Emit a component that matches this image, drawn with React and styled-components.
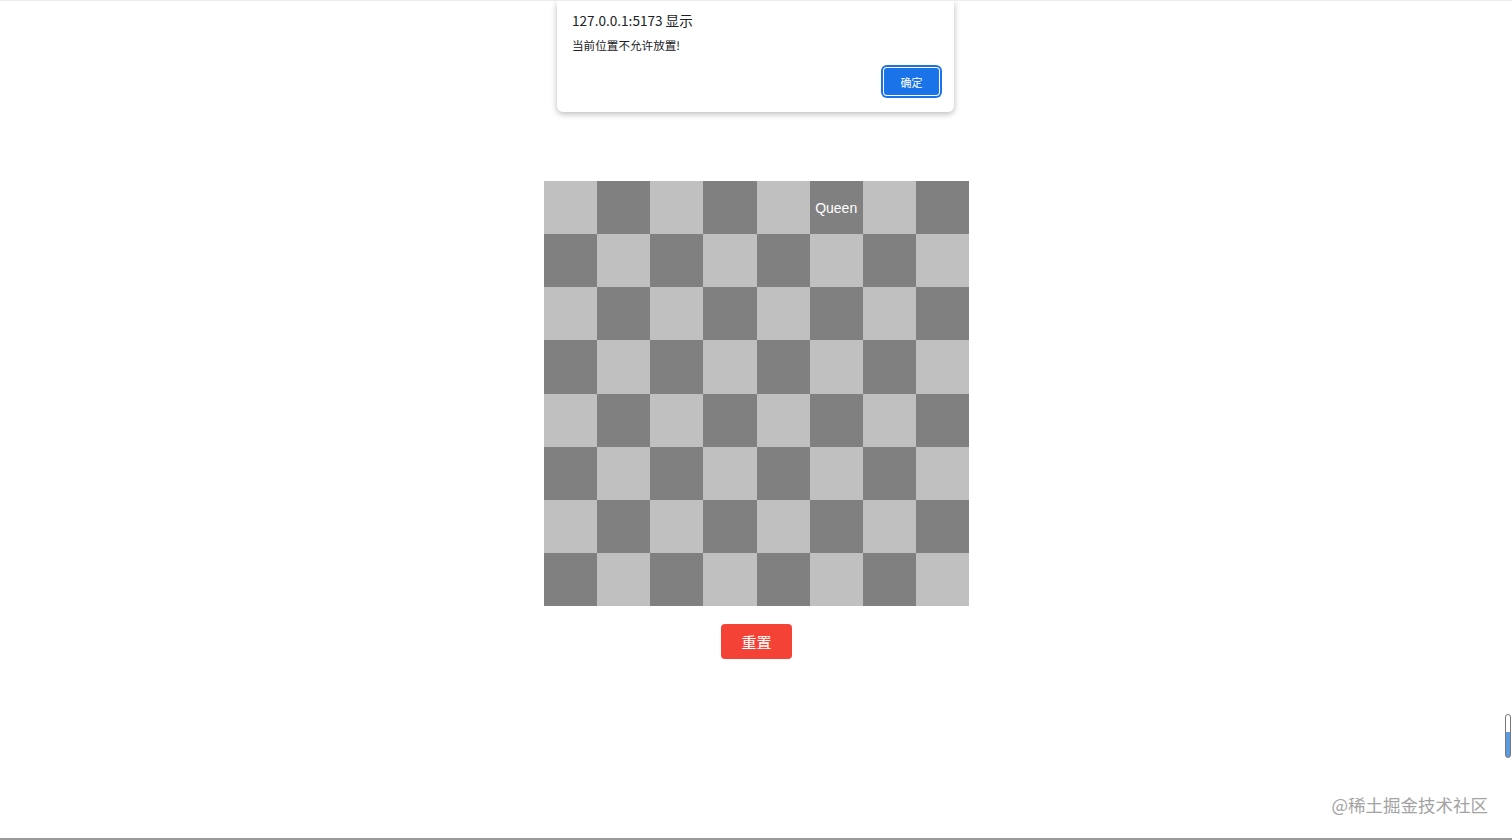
import React, { useState } from 'react'
import styled, { createGlobalStyle } from 'styled-components'

const GlobalStyle = createGlobalStyle`
    html, body {
        margin: 0;
        padding: 0;
        background: #fff;
        font-family: "Liberation Sans", "Noto Sans CJK SC", sans-serif;
    }
`

const Page = styled.div`
    position: relative;
    width: 1512px;
    height: 840px;
    overflow: hidden;
    border-top: 1px solid #ececec;
    border-bottom: 2px solid #9a9a9a;
    box-sizing: border-box;
    display: flex;
    flex-direction: column;
    align-items: center;
    padding-top: 180px;
    padding-left: 1px;
`

const Board = styled.div`
    display: grid;
    grid-template-columns: repeat(8, 1fr);
    grid-template-rows: repeat(8, 1fr);
    width: 425px;
    height: 425px;
`

const Cell = styled.div`
    background: ${(p) => (p.dark ? '#808080' : '#c0c0c0')};
    display: flex;
    align-items: center;
    justify-content: center;
    color: #fff;
    font-size: 14px;
    font-family: "Liberation Sans", Arial, sans-serif;
`

const ResetButton = styled.button`
    margin-top: 18px;
    width: 71px;
    height: 35px;
    border: none;
    border-radius: 4px;
    background: #f44336;
    color: #fff;
    font-size: 15px;
    font-family: "Noto Sans CJK SC", sans-serif;
    cursor: pointer;
`

const Dialog = styled.div`
    position: absolute;
    top: 0;
    left: 557px;
    width: 397px;
    height: 111px;
    box-sizing: border-box;
    background: #fff;
    border-radius: 0 0 6px 6px;
    box-shadow: 0 2px 6px rgba(0, 0, 0, 0.28);
    padding: 9px 14px 0 15px;
    font-family: "Noto Sans CJK SC", "Noto Sans", sans-serif;
    display: flex;
    flex-direction: column;
`

const DialogTitle = styled.div`
    font-size: 13.6px;
    color: #202124;
    line-height: 20px;
`

const DialogText = styled.div`
    margin-top: 6px;
    font-size: 11.6px;
    color: #202124;
    line-height: 18px;
`

const DialogActions = styled.div`
    display: flex;
    justify-content: flex-end;
    margin-top: 13px;
`

const OkButton = styled.button`
    width: 57px;
    height: 29px;
    border: none;
    border-radius: 4px;
    background: #1a73e8;
    color: #fff;
    font-size: 11px;
    font-family: "Noto Sans CJK SC", sans-serif;
    box-shadow: 0 0 0 1px #fff inset, 0 0 0 2px #1a73e8;
    outline: none;
`

const Watermark = styled.div`
    position: absolute;
    right: 24px;
    bottom: 21px;
    font-size: 17.5px;
    color: #a3a3a3;
    font-family: "Noto Sans CJK SC", sans-serif;
`

const Scroller = styled.div`
    position: absolute;
    right: 1px;
    top: 713px;
    width: 6px;
    height: 44px;
    border: 1px solid #777;
    border-radius: 4px;
    background: linear-gradient(to bottom, #fff 0 40%, #5b9be0 40% 100%);
    box-sizing: border-box;
`

export default function App() {
    const [queen] = useState({ row: 0, col: 5 })
    const cells = []
    for (let r = 0; r < 8; r++) {
        for (let c = 0; c < 8; c++) {
            cells.push(
                <Cell key={`${r}-${c}`} dark={(r + c) % 2 === 1}>
                    {queen.row === r && queen.col === c ? 'Queen' : null}
                </Cell>
            )
        }
    }

    return (
        <>
            <GlobalStyle />
            <Page>
                <Board>{cells}</Board>
                <ResetButton>重置</ResetButton>
                <Dialog>
                    <DialogTitle>127.0.0.1:5173 显示</DialogTitle>
                    <DialogText>当前位置不允许放置!</DialogText>
                    <DialogActions>
                        <OkButton>确定</OkButton>
                    </DialogActions>
                </Dialog>
                <Scroller />
                <Watermark>@稀土掘金技术社区</Watermark>
            </Page>
        </>
    )
}
